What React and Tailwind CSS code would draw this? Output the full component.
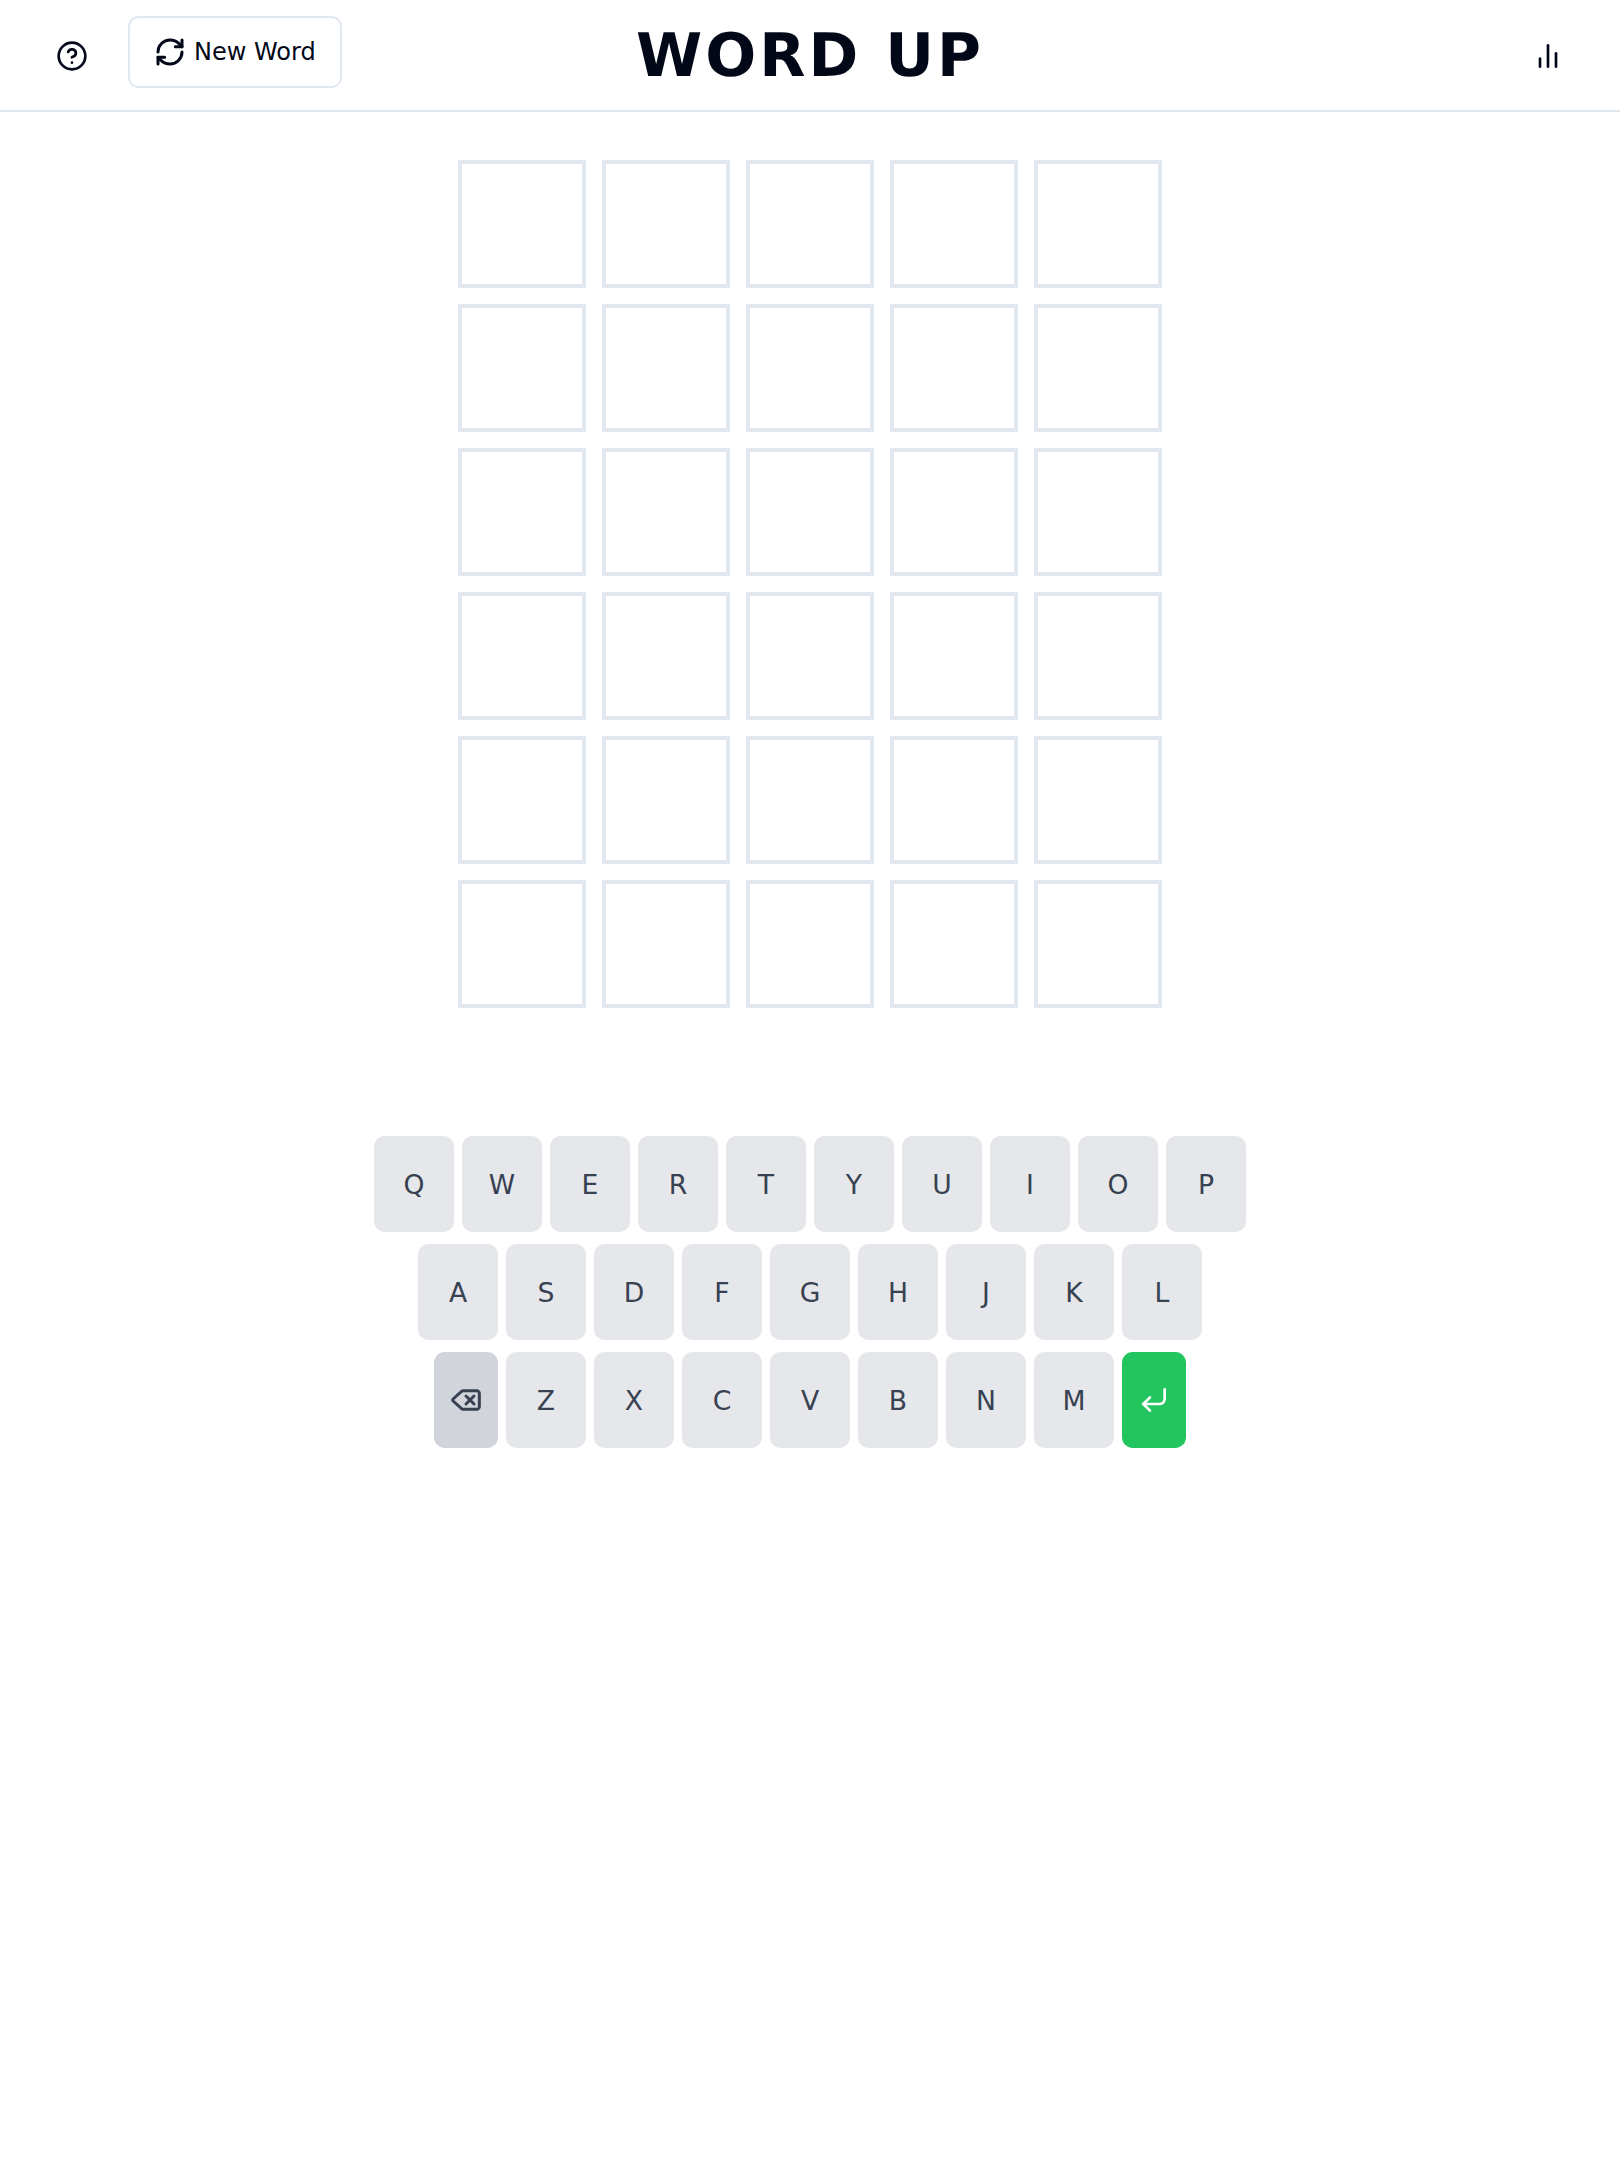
import React from "react";
import { CircleHelp, RefreshCw, Delete, CornerDownLeft } from "lucide-react";

const rows = [
  ["Q", "W", "E", "R", "T", "Y", "U", "I", "O", "P"],
  ["A", "S", "D", "F", "G", "H", "J", "K", "L"],
];
const lastRow = ["Z", "X", "C", "V", "B", "N", "M"];

function Key({ children }) {
  return (
    <button className="flex h-24 w-20 items-center justify-center rounded-[10.67px] bg-[#e5e7eb] pt-0.5 text-[26.67px] text-[#374151]">
      {children}
    </button>
  );
}

export default function App() {
  return (
    <div className="min-h-[2160px] bg-white font-['DejaVu_Sans',sans-serif] text-[#020817] [text-rendering:geometricPrecision]">
      <header className="relative flex h-[112px] items-center justify-between border-b-2 border-[#e2e8f0] px-14 pt-0.5">
        <div className="flex items-center gap-10">
          <button>
            <CircleHelp size={32} strokeWidth={2} className="block" />
          </button>
          <button className="mb-2 flex h-[72px] items-center gap-2 rounded-[10.67px] border-2 border-[#e2e8f0] bg-white px-6 text-2xl">
            <RefreshCw size={32} strokeWidth={2.25} />
            New Word
          </button>
        </div>
        <h1 className="absolute left-1/2 top-[26px] -translate-x-1/2 whitespace-nowrap text-[60px] font-bold leading-none tracking-[0.05em]">
          WORD UP
        </h1>
        <button>
          <svg width="32" height="32" viewBox="0 0 24 24" fill="none" stroke="currentColor" strokeWidth="2" strokeLinecap="round" strokeLinejoin="round" className="block">
            <path d="M18 20V10" />
            <path d="M12 20V4" />
            <path d="M6 20v-6" />
          </svg>
        </button>
      </header>

      <main className="flex flex-col items-center pt-12">
        <div className="grid grid-cols-[repeat(5,128px)] grid-rows-[repeat(6,128px)] gap-4">
          {Array.from({ length: 30 }, (_, i) => (
            <div key={i} className="border-4 border-[#e2e8f0]" />
          ))}
        </div>

        <div className="mt-32 flex flex-col items-center gap-3">
          {rows.map((row, i) => (
            <div key={i} className="flex gap-2">
              {row.map((k) => (
                <Key key={k}>{k}</Key>
              ))}
            </div>
          ))}
          <div className="flex gap-2">
            <button className="flex h-24 w-16 items-center justify-center rounded-[10.67px] bg-[#d1d5db] text-[#374151]">
              <Delete size={32} strokeWidth={2.25} />
            </button>
            {lastRow.map((k) => (
              <Key key={k}>{k}</Key>
            ))}
            <button className="flex h-24 w-16 items-center justify-center rounded-[10.67px] bg-[#22c55e] text-white">
              <CornerDownLeft size={32} strokeWidth={2} />
            </button>
          </div>
        </div>
      </main>
    </div>
  );
}
